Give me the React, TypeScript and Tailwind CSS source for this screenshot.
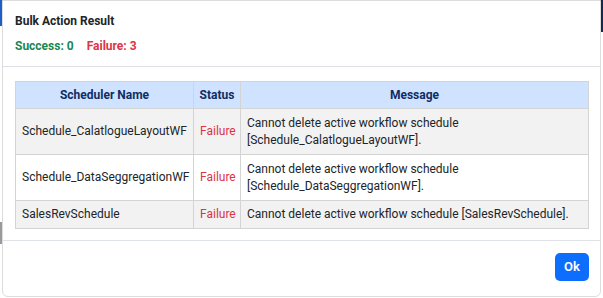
import React from "react";

const rows = [
  {
    name: "Schedule_CalatlogueLayoutWF",
    msg: ["Cannot delete active workflow schedule", "[Schedule_CalatlogueLayoutWF]."],
  },
  {
    name: "Schedule_DataSeggregationWF",
    msg: ["Cannot delete active workflow schedule", "[Schedule_DataSeggregationWF]."],
  },
  {
    name: "SalesRevSchedule",
    msg: ["Cannot delete active workflow schedule [SalesRevSchedule]."],
  },
];

export default function App() {
  return (
    <div
      className="relative w-[603px] h-[298px] bg-white overflow-hidden"
      style={{ fontFamily: "Roboto, 'Liberation Sans', sans-serif" }}
    >
      <div className="absolute left-0 top-0 w-[4px] h-[26px] bg-[#1d5fc4]" />
      <div className="absolute right-0 top-0 w-[4px] h-[32px] bg-[#0f2a55]" />
      <div className="absolute left-0 top-[222px] w-[3px] h-[22px] bg-[#9a9a9a]" />
      <div className="relative mx-[2px] h-[297px] bg-white border border-[#dcdcdc] rounded-b-[6px] flex flex-col">
        <div className="px-[12px] pt-[13px] h-[66px] border-b border-[#dee2e6]">
          <div className="text-[12px] font-bold text-[#212529] leading-[15px]">Bulk Action Result</div>
          <div className="mt-[9px] flex gap-[13px] text-[12px] font-bold leading-[16px]">
            <span className="text-[#198754]">Success: 0</span>
            <span className="text-[#dc3545]">Failure: 3</span>
          </div>
        </div>
        <div className="px-[12px] pt-[14px] h-[174px] border-b border-[#dee2e6]">
          <table className="w-[574px] table-fixed border-collapse text-[12px] text-[#212529] leading-[17px]">
            <colgroup>
              <col className="w-[178px]" />
              <col className="w-[47px]" />
              <col />
            </colgroup>
            <thead>
              <tr className="bg-[#cfe2ff] h-[27px]">
                <th className="border border-[#d4d4d4] font-bold text-[#0f2d63] text-center">Scheduler Name</th>
                <th className="border border-[#d4d4d4] font-bold text-[#0f2d63] text-center">Status</th>
                <th className="border border-[#d4d4d4] font-bold text-[#0f2d63] text-center">Message</th>
              </tr>
            </thead>
            <tbody>
              {rows.map((r, i) => (
                <tr key={r.name} className={i % 2 === 0 ? "bg-[#f2f2f2]" : "bg-white"}>
                  <td className={`border border-[#d4d4d4] px-[6px] whitespace-nowrap ${r.msg.length > 1 ? "h-[46px]" : "h-[28px]"}`}>{r.name}</td>
                  <td className="border border-[#d4d4d4] px-[6px] text-[#dc3545] whitespace-nowrap">Failure</td>
                  <td className="border border-[#d4d4d4] px-[6px]">
                    {r.msg.map((m) => (
                      <div key={m}>{m}</div>
                    ))}
                  </td>
                </tr>
              ))}
            </tbody>
          </table>
        </div>
        <div className="flex-1 flex justify-end items-start pt-[12px] pr-[11px]">
          <button className="w-[34px] h-[28px] rounded-[5px] bg-[#0d6efd] text-white text-[13px] font-semibold">Ok</button>
        </div>
      </div>
    </div>
  );
}
